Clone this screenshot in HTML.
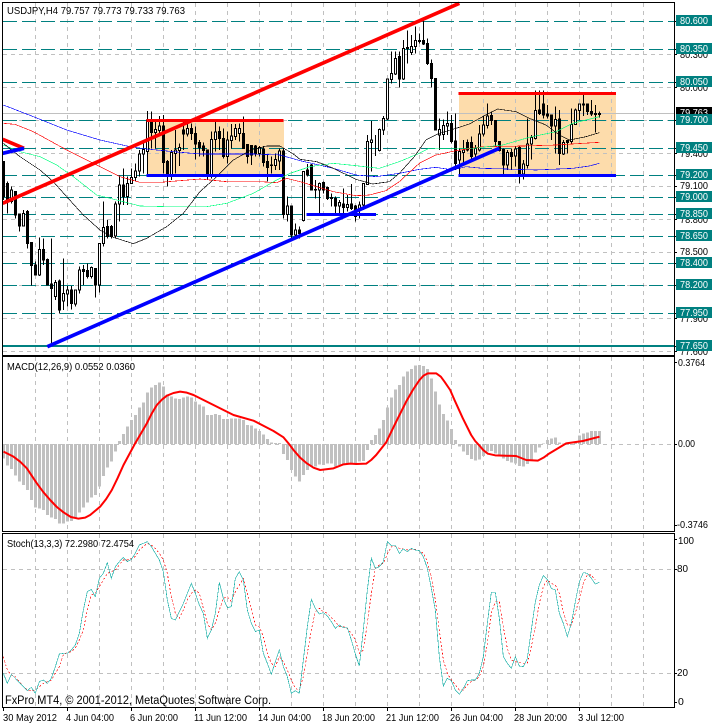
<!DOCTYPE html>
<html><head><meta charset="utf-8"><title>USDJPY,H4</title>
<style>
html,body{margin:0;padding:0;background:#fff;width:712px;height:725px;overflow:hidden}
svg{display:block}
text{font-family:"Liberation Sans",sans-serif;font-size:10.5px;fill:#000}
.w{fill:#fff}
</style></head><body>
<svg width="712" height="725" viewBox="0 0 712 725" xmlns="http://www.w3.org/2000/svg">
<rect width="712" height="725" fill="#fff"/>
<!-- rectangles -->
<g fill="#FDDCAB"><rect x="147" y="120" width="137" height="55"/><rect x="459" y="93" width="157" height="82"/></g>
<!-- grid -->
<g stroke="#c0c0c0" stroke-width="1" stroke-dasharray="4 4" fill="none" shape-rendering="crispEdges">
<path d="M35.5 3V355M67.5 3V355M99.5 3V355M131.5 3V355M163.5 3V355M195.5 3V355M227.5 3V355M259.5 3V355M291.5 3V355M323.5 3V355M355.5 3V355M387.5 3V355M419.5 3V355M451.5 3V355M483.5 3V355M515.5 3V355M547.5 3V355M579.5 3V355M611.5 3V355M643.5 3V355"/>
<path d="M35.5 357V531M67.5 357V531M99.5 357V531M131.5 357V531M163.5 357V531M195.5 357V531M227.5 357V531M259.5 357V531M291.5 357V531M323.5 357V531M355.5 357V531M387.5 357V531M419.5 357V531M451.5 357V531M483.5 357V531M515.5 357V531M547.5 357V531M579.5 357V531M611.5 357V531M643.5 357V531"/>
<path d="M35.5 534V707M67.5 534V707M99.5 534V707M131.5 534V707M163.5 534V707M195.5 534V707M227.5 534V707M259.5 534V707M291.5 534V707M323.5 534V707M355.5 534V707M387.5 534V707M419.5 534V707M451.5 534V707M483.5 534V707M515.5 534V707M547.5 534V707M579.5 534V707M611.5 534V707M643.5 534V707"/>
<path d="M3 54.5H674M3 87.5H674M3 120.5H674M3 153.5H674M3 186.5H674M3 219.5H674M3 252.5H674M3 285.5H674M3 318.5H674M3 351.5H674"/>
<path d="M3 444.5H674M3 569.5H674M3 673.5H674"/>
</g>
<!-- teal level lines -->
<g stroke="#008080" stroke-width="1" fill="none" shape-rendering="crispEdges">
<path stroke-dasharray="14 5" d="M3 21.5H674M3 49.5H674M3 82.5H674M3 120.5H674M3 148.5H674M3 175.5H674M3 197.5H674M3 214.5H674M3 236.5H674M3 263.5H674M3 285.5H674M3 313.5H674"/>
<path stroke-width="2" d="M3 346H674"/>
</g>
<path d="M3 113.5H674" stroke="#c0c0c0" stroke-width="1" shape-rendering="crispEdges"/>
<!-- candles -->
<g transform="scale(.333333) translate(.5 0)" stroke="#000" stroke-width="3" shape-rendering="crispEdges">
<path fill="none" d="M10 485V600M22 545V640M34 560V610M46 575V655M58 640V695M70 630V680M82 630V745M94 728V856M106 785V825M118 712V828M130 715V795M142 775V855M154 715V1037M166 840V900M178 838V940M190 775V930M202 858V920M214 858V928M226 870V920M238 800V880M250 795V855M262 790V835M274 800V835M286 805V893M298 730V878M310 605V740M322 660V715M334 675V715M346 605V712M358 527V665M370 505V615M382 530V615M394 505V550M406 490V545M418 450V530M430 430V520M442 333V525M454 335V445M466 360V445M478 348V400M490 345V520M502 480V560M514 450V540M526 390V520M538 430V498M550 360V450M562 358V410M574 370V420M586 380V478M598 420V470M610 428V470M622 448V540M634 395V535M646 365V455M658 380V450M670 385V475M682 395V490M694 372V445M706 372V420M718 370V425M730 350V445M742 433V490M754 435V495M766 435V470M778 438V470M790 438V500M802 465V545M814 470V520M826 460V510M838 445V510M850 445V655M862 590V665M874 618V725M886 670V715M898 680V715M910 515V665M922 492V530M934 492V570M946 540V595M958 547V645M970 545V580M982 560V600M994 580V620M1006 590V645M1018 600V640M1030 565V640M1042 585V635M1054 552V630M1066 615V665M1078 605V655M1090 550V630M1102 405V555M1114 363V515M1126 405V468M1138 385V455M1150 348V405M1162 235V360M1174 155V250M1186 155V225M1198 155V262M1210 120V240M1222 92V190M1234 105V165M1246 80V160M1258 100V130M1270 60V135M1282 115V195M1294 178V262M1306 235V390M1318 355V450M1330 358V420M1342 335V405M1354 345V430M1366 340V510M1378 445V525M1390 420V490M1402 418V455M1414 410V478M1426 435V475M1438 375V455M1450 350V410M1462 310V385M1474 335V375M1486 360V437M1498 423V455M1510 445V525M1522 450V510M1534 445V510M1546 440V500M1558 440V550M1570 480V538M1582 355V505M1594 405V478M1606 272V418M1618 272V345M1630 272V355M1642 315V355M1654 345V420M1666 320V460M1678 330V495M1690 420V465M1702 420V460M1714 325V430M1726 325V375M1738 310V360M1750 285V348M1762 310V345M1774 300V348M1786 315V398M1798 335V352"/>
<path fill="#000" d="M7 485h6V590h-6zM19 550h6V605h-6zM43 575h6V645h-6zM55 642h6V678h-6zM79 635h6V730h-6zM91 728h6V797h-6zM103 795h6V825h-6zM127 748h6V780h-6zM139 778h6V855h-6zM151 852h6V865h-6zM175 843h6V930h-6zM211 870h6V910h-6zM247 808h6V815h-6zM259 812h6V830h-6zM283 805h6V855h-6zM319 680h6V710h-6zM331 680h6V710h-6zM367 555h6V590h-6zM451 360h6V398h-6zM487 378h6V488h-6zM499 485h6V530h-6zM547 390h6V402h-6zM571 385h6V400h-6zM583 400h6V432h-6zM595 428h6V442h-6zM607 438h6V452h-6zM619 450h6V530h-6zM655 395h6V415h-6zM667 415h6V470h-6zM727 400h6V445h-6zM739 433h6V470h-6zM751 437h6V465h-6zM763 438h6V462h-6zM787 447h6V487h-6zM799 485h6V502h-6zM847 453h6V643h-6zM871 618h6V705h-6zM895 690h6V700h-6zM919 510h6V525h-6zM931 495h6V570h-6zM943 568h6V570h-6zM967 548h6V570h-6zM979 562h6V595h-6zM991 592h6V596h-6zM1003 595h6V618h-6zM1027 612h6V622h-6zM1051 612h6V625h-6zM1063 618h6V650h-6zM1195 170h6V237h-6zM1255 122h6V125h-6zM1267 122h6V132h-6zM1279 130h6V190h-6zM1291 190h6V236h-6zM1303 236h6V390h-6zM1351 370h6V425h-6zM1363 423h6V490h-6zM1399 427h6V450h-6zM1411 427h6V470h-6zM1471 347h6V362h-6zM1483 362h6V425h-6zM1495 425h6V452h-6zM1507 448h6V495h-6zM1531 457h6V470h-6zM1555 443h6V525h-6zM1615 330h6V340h-6zM1627 312h6V345h-6zM1639 342h6V348h-6zM1651 345h6V378h-6zM1675 357h6V460h-6zM1699 422h6V428h-6zM1747 312h6V315h-6zM1759 312h6V335h-6zM1771 335h6V342h-6zM1783 340h6V343h-6zM1795 340h6V343h-6z"/>
<path fill="#fff" d="M31 570h6V605h-6zM67 640h6V678h-6zM115 748h6V825h-6zM163 848h6V890h-6zM187 880h6V903h-6zM199 870h6V882h-6zM223 870h6V912h-6zM235 810h6V870h-6zM271 803h6V830h-6zM295 730h6V855h-6zM307 682h6V730h-6zM343 612h6V708h-6zM355 555h6V612h-6zM379 550h6V590h-6zM391 533h6V550h-6zM403 513h6V533h-6zM415 462h6V513h-6zM427 448h6V462h-6zM439 360h6V455h-6zM463 388h6V398h-6zM475 378h6V392h-6zM511 458h6V530h-6zM523 450h6V460h-6zM535 442h6V452h-6zM559 385h6V402h-6zM631 418h6V530h-6zM643 396h6V418h-6zM679 420h6V470h-6zM691 408h6V422h-6zM703 385h6V410h-6zM715 385h6V400h-6zM775 443h6V460h-6zM811 495h6V497h-6zM823 478h6V497h-6zM835 453h6V483h-6zM859 618h6V643h-6zM883 690h6V705h-6zM907 515h6V662h-6zM955 550h6V570h-6zM1015 608h6V618h-6zM1039 613h6V623h-6zM1075 615h6V625h-6zM1087 550h6V615h-6zM1099 425h6V553h-6zM1111 420h6V428h-6zM1135 388h6V452h-6zM1147 355h6V390h-6zM1159 237h6V357h-6zM1171 220h6V238h-6zM1183 175h6V222h-6zM1207 145h6V237h-6zM1219 142h6V145h-6zM1231 140h6V158h-6zM1243 122h6V140h-6zM1315 388h6V405h-6zM1327 376h6V404h-6zM1339 370h6V378h-6zM1375 455h6V480h-6zM1387 450h6V457h-6zM1423 445h6V462h-6zM1435 402h6V450h-6zM1447 375h6V402h-6zM1459 348h6V376h-6zM1519 457h6V495h-6zM1543 447h6V468h-6zM1567 492h6V522h-6zM1579 432h6V497h-6zM1591 413h6V432h-6zM1603 332h6V415h-6zM1663 358h6V378h-6zM1687 428h6V462h-6zM1711 373h6V425h-6zM1723 330h6V373h-6zM1735 312h6V332h-6z"/>
</g>
<!-- moving averages -->
<g transform="scale(.333333)" fill="none" stroke-width="2" shape-rendering="crispEdges">
<path stroke="#0000ff" d="M10 315L100 350 200 390 300 420 390 440 440 447 520 455 600 462 680 462 760 462 840 465 900 482 1000 505 1068 525 1128 530 1198 520 1258 508 1308 502 1358 510 1398 500 1448 505 1518 507 1608 510 1718 505 1768 498 1798 490"/>
<path stroke="#ff0000" d="M10 370L45 373 100 395 200 450 280 490 360 530 420 547 480 547 540 542 600 537 680 545 780 545 830 548 860 535 900 545 1000 575 1068 587 1108 585 1158 572 1198 545 1258 490 1308 465 1368 452 1448 440 1568 438 1668 435 1748 430 1798 427"/>
<path stroke="#00ff7f" d="M10 435L60 455 120 470 170 495 220 530 290 585 350 600 420 618 500 620 620 620 680 610 760 580 830 540 870 520 930 500 1000 490 1068 497 1138 505 1198 485 1253 462 1288 445 1358 445 1418 445 1508 435 1588 412 1668 395 1718 370 1798 350"/>
<path stroke="#000" d="M10 430L60 470 120 510 160 545 200 590 250 645 300 690 340 712 400 731 440 715 500 680 550 640 600 575 650 530 700 480 750 452 800 438 840 438 880 462 900 478 950 485 1000 505 1068 538 1118 552 1168 545 1198 520 1243 470 1278 420 1318 400 1368 385 1408 372 1448 350 1493 327 1548 335 1588 355 1638 375 1678 405 1708 420 1758 410 1798 398"/>
</g>
<!-- trend lines -->
<g transform="scale(.333333)" fill="none" stroke-width="11">
<path stroke="#ff0000" d="M8 610L1378 10M8 418L72 445"/>
<path stroke="#ff0000" stroke-width="9" d="M440 361H850M1376 280H1848" shape-rendering="crispEdges"/>
<path stroke="#0000ff" d="M142 1040L1498 445M8 460L72 445"/>
<path stroke="#0000ff" stroke-width="9" d="M440 526H850M920 643H1128M1376 526H1848" shape-rendering="crispEdges"/>
</g>
<!-- MACD histogram -->
<g transform="translate(0 355) scale(.333333) translate(.5 0)" fill="none">
<path stroke="#c0c0c0" stroke-width="9" shape-rendering="crispEdges" d="M10 267V310M22 267V332M34 267V342M46 267V362M58 267V380M70 267V390M82 267V405M94 267V435M106 267V457M118 267V460M130 267V465M142 267V480M154 267V488M166 267V492M178 267V506M190 267V506M202 267V500M214 267V498M226 267V490M238 267V473M250 267V458M262 267V443M274 267V428M286 267V420M298 267V395M310 267V363M322 267V337M334 267V320M346 267V290M358 267V258M370 267V237M382 267V215M394 267V195M406 267V180M418 267V158M430 267V142M442 267V112M454 267V97M466 267V90M478 267V82M490 267V95M502 267V118M514 267V125M526 267V130M538 267V132M550 267V128M562 267V125M574 267V128M586 267V140M598 267V148M610 267V155M622 267V180M634 267V180M646 267V177M658 267V180M670 267V192M682 267V192M694 267V190M706 267V190M718 267V190M730 267V195M742 267V210M754 267V212M766 267V220M778 267V228M790 267V238M802 267V252M814 267V262M826 267V264M838 267V264M850 267V297M862 267V315M874 267V345M886 267V365M898 267V380M910 267V360M922 267V345M934 267V335M946 267V335M958 267V328M970 267V330M982 267V325M994 267V325M1006 267V335M1018 267V330M1030 267V330M1042 267V325M1054 267V325M1066 267V325M1078 267V320M1090 267V318M1102 267V285M1114 267V255M1126 267V240M1138 267V220M1150 267V195M1162 267V158M1174 267V128M1186 267V103M1198 267V90M1210 267V65M1222 267V50M1234 267V42M1246 267V32M1258 267V30M1270 267V33M1282 267V42M1294 267V70M1306 267V110M1318 267V148M1330 267V177M1342 267V197M1354 267V222M1366 267V255M1378 267V275M1390 267V290M1402 267V300M1414 267V312M1426 267V316M1438 267V313M1450 267V303M1462 267V290M1474 267V288M1486 267V295M1498 267V298M1510 267V310M1522 267V318M1534 267V322M1546 267V325M1558 267V333M1570 267V335M1582 267V327M1594 267V315M1606 267V293M1618 267V278M1630 267V265M1642 267V255M1654 267V250M1666 267V248M1678 267V262M1690 267V265M1702 267V270M1714 267V270M1726 267V262M1738 267V242M1750 267V235M1762 267V232M1774 267V228M1786 267V228M1798 267V228"/>
<path stroke="#ff0000" stroke-width="6" stroke-linejoin="round" d="M10 290L40 305 60 320 80 340 110 385 130 412 150 435 170 456 190 472 212 486 235 491 255 488 270 480 300 455 318 432 335 405 352 370 370 330 405 265 440 205 455 175 470 150 485 134 500 122 520 114 540 110 560 113 580 120 640 150 700 180 760 197 820 228 850 247 865 265 880 285 900 308 920 325 940 338 960 345 1000 340 1030 328 1050 326 1068 327 1098 326 1113 315 1128 300 1158 262 1188 200 1218 140 1238 105 1258 75 1270 62 1283 55 1308 55 1322 65 1333 80 1350 105 1363 135 1388 190 1413 240 1425 258 1438 272 1450 286 1463 296 1485 301 1508 302 1548 303 1578 315 1613 317 1630 308 1648 295 1698 265 1748 258 1798 245"/>
</g>
<!-- Stochastic -->
<g transform="translate(0 530) scale(.333333)" fill="none" stroke-width="2" shape-rendering="crispEdges">
<path stroke="#ff0000" stroke-dasharray="6 6" d="M10 380L22 420 34 435 46 440 58 455 70 470 82 480 94 482 106 480 118 470 130 460 142 455 154 450 166 430 178 410 190 375 202 368 214 365 226 355 238 330 250 300 262 240 274 195 286 190 298 170 310 150 322 130 334 125 346 120 358 105 370 90 382 90 394 85 406 80 418 60 430 50 442 40 454 45 466 55 478 70 490 90 502 130 514 200 526 250 538 265 550 240 562 210 574 190 586 180 598 190 610 235 622 280 634 300 646 280 658 240 670 205 682 200 694 215 706 185 718 165 730 145 742 190 754 235 766 285 778 290 790 320 802 370 814 400 826 410 838 380 850 395 862 420 874 450 886 475 898 480 910 440 922 370 934 300 946 245 958 235 970 245 982 250 994 262 1006 275 1018 290 1030 290 1042 295 1054 310 1066 330 1078 370 1090 360 1102 280 1114 190 1126 115 1138 105 1150 100 1162 72 1174 50 1186 50 1198 55 1210 57 1222 60 1234 57 1246 58 1258 62 1270 70 1282 95 1294 140 1306 210 1318 300 1330 390 1342 430 1354 450 1366 465 1378 480 1390 480 1402 465 1414 455 1426 450 1438 440 1450 410 1462 340 1474 250 1486 215 1498 215 1510 290 1522 355 1534 390 1546 395 1558 398 1570 400 1582 400 1594 350 1606 290 1618 220 1630 170 1642 150 1654 160 1666 165 1678 190 1690 245 1702 285 1714 285 1726 250 1738 205 1750 160 1762 135 1774 135 1786 150"/>
<path stroke="#20b2aa" d="M10 430L22 460 34 433 46 445 58 458 70 470 82 482 94 472 106 490 118 455 130 450 142 460 154 445 166 410 178 372 190 370 202 370 214 360 226 345 238 310 250 240 262 185 274 178 286 200 298 145 310 130 322 98 334 145 346 110 358 95 370 82 382 95 394 88 406 70 418 45 442 35 454 50 466 70 478 90 490 125 502 210 514 265 526 270 538 245 550 220 562 190 574 160 586 190 598 225 610 250 622 325 634 300 646 250 658 157 670 205 682 233 694 230 706 145 718 125 730 150 742 240 754 280 766 305 778 300 790 370 802 400 814 433 826 395 838 360 850 410 862 440 874 490 886 482 898 490 910 390 922 290 934 208 946 235 958 252 970 248 982 258 994 275 1006 295 1018 285 1030 293 1042 293 1054 330 1066 372 1078 408 1090 300 1102 180 1114 85 1126 115 1138 110 1150 95 1162 35 1174 47 1186 47 1198 70 1210 57 1222 65 1234 55 1246 60 1258 62 1270 80 1282 115 1294 175 1306 240 1318 380 1330 468 1342 445 1354 452 1366 480 1378 493 1390 475 1402 452 1414 450 1426 450 1438 430 1450 380 1462 280 1474 187 1486 187 1498 265 1510 380 1522 400 1534 415 1546 380 1558 408 1570 410 1582 385 1594 300 1606 215 1618 165 1630 137 1642 148 1654 175 1666 180 1678 250 1690 280 1702 320 1714 280 1726 215 1738 155 1750 128 1762 130 1774 145 1786 162 1798 157"/>
</g>
<!-- panel borders -->
<g stroke="#000" stroke-width="1" fill="none" shape-rendering="crispEdges">
<path d="M2.5 2.5H674.5V355.5H2.5Z"/>
<path d="M2.5 356.5H674.5V531.5H2.5Z"/>
<path d="M2.5 533.5H674.5V707.5H2.5Z"/>
<path d="M674 21.5h3M674 49.5h3M674 54.5h3M674 82.5h3M674 87.5h3M674 120.5h3M674 148.5h3M674 153.5h3M674 175.5h3M674 186.5h3M674 197.5h3M674 214.5h3M674 219.5h3M674 236.5h3M674 252.5h3M674 263.5h3M674 285.5h3M674 313.5h3M674 318.5h3M674 346.5h3M674 351.5h3M674 362.5h3M674 444.5h3M674 525.5h3M674 539.5h3M674 569.5h3M674 673.5h3M674 702.5h3"/>
<path d="M3.5 707v4M67.5 707v4M131.5 707v4M195.5 707v4M259.5 707v4M323.5 707v4M387.5 707v4M451.5 707v4M515.5 707v4M579.5 707v4"/>
</g>
<!-- price scale behind labels -->
<g>
<text x="680" y="58" textLength="28" lengthAdjust="spacingAndGlyphs">80.300</text>
<text x="680" y="91" textLength="28" lengthAdjust="spacingAndGlyphs">80.000</text>
<text x="680" y="157" textLength="28" lengthAdjust="spacingAndGlyphs">79.400</text>
<text x="680" y="189" textLength="28" lengthAdjust="spacingAndGlyphs">79.100</text>
<text x="680" y="223" textLength="28" lengthAdjust="spacingAndGlyphs">78.800</text>
<text x="680" y="255" textLength="28" lengthAdjust="spacingAndGlyphs">78.500</text>
<text x="680" y="322" textLength="28" lengthAdjust="spacingAndGlyphs">77.900</text>
<text x="680" y="355" textLength="28" lengthAdjust="spacingAndGlyphs">77.600</text>
</g>
<rect x="676" y="107" width="36" height="11" fill="#000"/>
<text class="w" x="680" y="116" textLength="28" lengthAdjust="spacingAndGlyphs">79.763</text>
<g fill="#008080">
<rect x="676" y="15" width="36" height="11"/><rect x="676" y="43" width="36" height="11"/><rect x="676" y="76" width="36" height="11"/><rect x="676" y="114" width="36" height="11"/><rect x="676" y="142" width="36" height="11"/><rect x="676" y="169" width="36" height="11"/><rect x="676" y="191" width="36" height="11"/><rect x="676" y="208" width="36" height="11"/><rect x="676" y="230" width="36" height="11"/><rect x="676" y="257" width="36" height="11"/><rect x="676" y="279" width="36" height="11"/><rect x="676" y="307" width="36" height="11"/><rect x="676" y="340" width="36" height="11"/>
</g>
<g>
<text class="w" x="680" y="24" textLength="28" lengthAdjust="spacingAndGlyphs">80.600</text>
<text class="w" x="680" y="52" textLength="28" lengthAdjust="spacingAndGlyphs">80.350</text>
<text class="w" x="680" y="85" textLength="28" lengthAdjust="spacingAndGlyphs">80.050</text>
<text class="w" x="680" y="123" textLength="28" lengthAdjust="spacingAndGlyphs">79.700</text>
<text class="w" x="680" y="151" textLength="28" lengthAdjust="spacingAndGlyphs">79.450</text>
<text class="w" x="680" y="178" textLength="28" lengthAdjust="spacingAndGlyphs">79.200</text>
<text class="w" x="680" y="200" textLength="28" lengthAdjust="spacingAndGlyphs">79.000</text>
<text class="w" x="680" y="217" textLength="28" lengthAdjust="spacingAndGlyphs">78.850</text>
<text class="w" x="680" y="239" textLength="28" lengthAdjust="spacingAndGlyphs">78.650</text>
<text class="w" x="680" y="266" textLength="28" lengthAdjust="spacingAndGlyphs">78.400</text>
<text class="w" x="680" y="288" textLength="28" lengthAdjust="spacingAndGlyphs">78.200</text>
<text class="w" x="680" y="316" textLength="28" lengthAdjust="spacingAndGlyphs">77.950</text>
<text class="w" x="680" y="349" textLength="28" lengthAdjust="spacingAndGlyphs">77.650</text>
</g>
<!-- indicator scales -->
<text x="678" y="366" textLength="27" lengthAdjust="spacingAndGlyphs">0.3764</text>
<text x="678" y="447" textLength="17" lengthAdjust="spacingAndGlyphs">0.00</text>
<text x="677" y="528" textLength="31" lengthAdjust="spacingAndGlyphs">-0.3746</text>
<text x="678" y="544" textLength="16" lengthAdjust="spacingAndGlyphs">100</text>
<text x="677" y="572" textLength="11" lengthAdjust="spacingAndGlyphs">80</text>
<text x="677" y="676" textLength="11" lengthAdjust="spacingAndGlyphs">20</text>
<text x="678" y="705">0</text>
<!-- panel titles -->
<text x="7" y="14" textLength="178" lengthAdjust="spacingAndGlyphs">USDJPY,H4  79.757 79.773 79.733 79.763</text>
<text x="7" y="370" textLength="128" lengthAdjust="spacingAndGlyphs">MACD(12,26,9) 0.0552 0.0360</text>
<text x="7" y="547" textLength="127" lengthAdjust="spacingAndGlyphs">Stoch(13,3,3) 72.2980 72.4754</text>
<text x="5" y="704" textLength="266" lengthAdjust="spacingAndGlyphs" style="font-size:11.5px">FxPro MT4, © 2001-2012, MetaQuotes Software Corp.</text>
<!-- time axis -->
<g>
<text x="3" y="721" textLength="54" lengthAdjust="spacingAndGlyphs">30 May 2012</text>
<text x="66" y="721" textLength="48" lengthAdjust="spacingAndGlyphs">4 Jun 04:00</text>
<text x="130" y="721" textLength="48" lengthAdjust="spacingAndGlyphs">6 Jun 20:00</text>
<text x="194" y="721" textLength="53" lengthAdjust="spacingAndGlyphs">11 Jun 12:00</text>
<text x="258" y="721" textLength="53" lengthAdjust="spacingAndGlyphs">14 Jun 04:00</text>
<text x="322" y="721" textLength="53" lengthAdjust="spacingAndGlyphs">18 Jun 20:00</text>
<text x="386" y="721" textLength="53" lengthAdjust="spacingAndGlyphs">21 Jun 12:00</text>
<text x="450" y="721" textLength="53" lengthAdjust="spacingAndGlyphs">26 Jun 04:00</text>
<text x="514" y="721" textLength="53" lengthAdjust="spacingAndGlyphs">28 Jun 20:00</text>
<text x="578" y="721" textLength="46" lengthAdjust="spacingAndGlyphs">3 Jul 12:00</text>
</g>
</svg>
</body></html>
